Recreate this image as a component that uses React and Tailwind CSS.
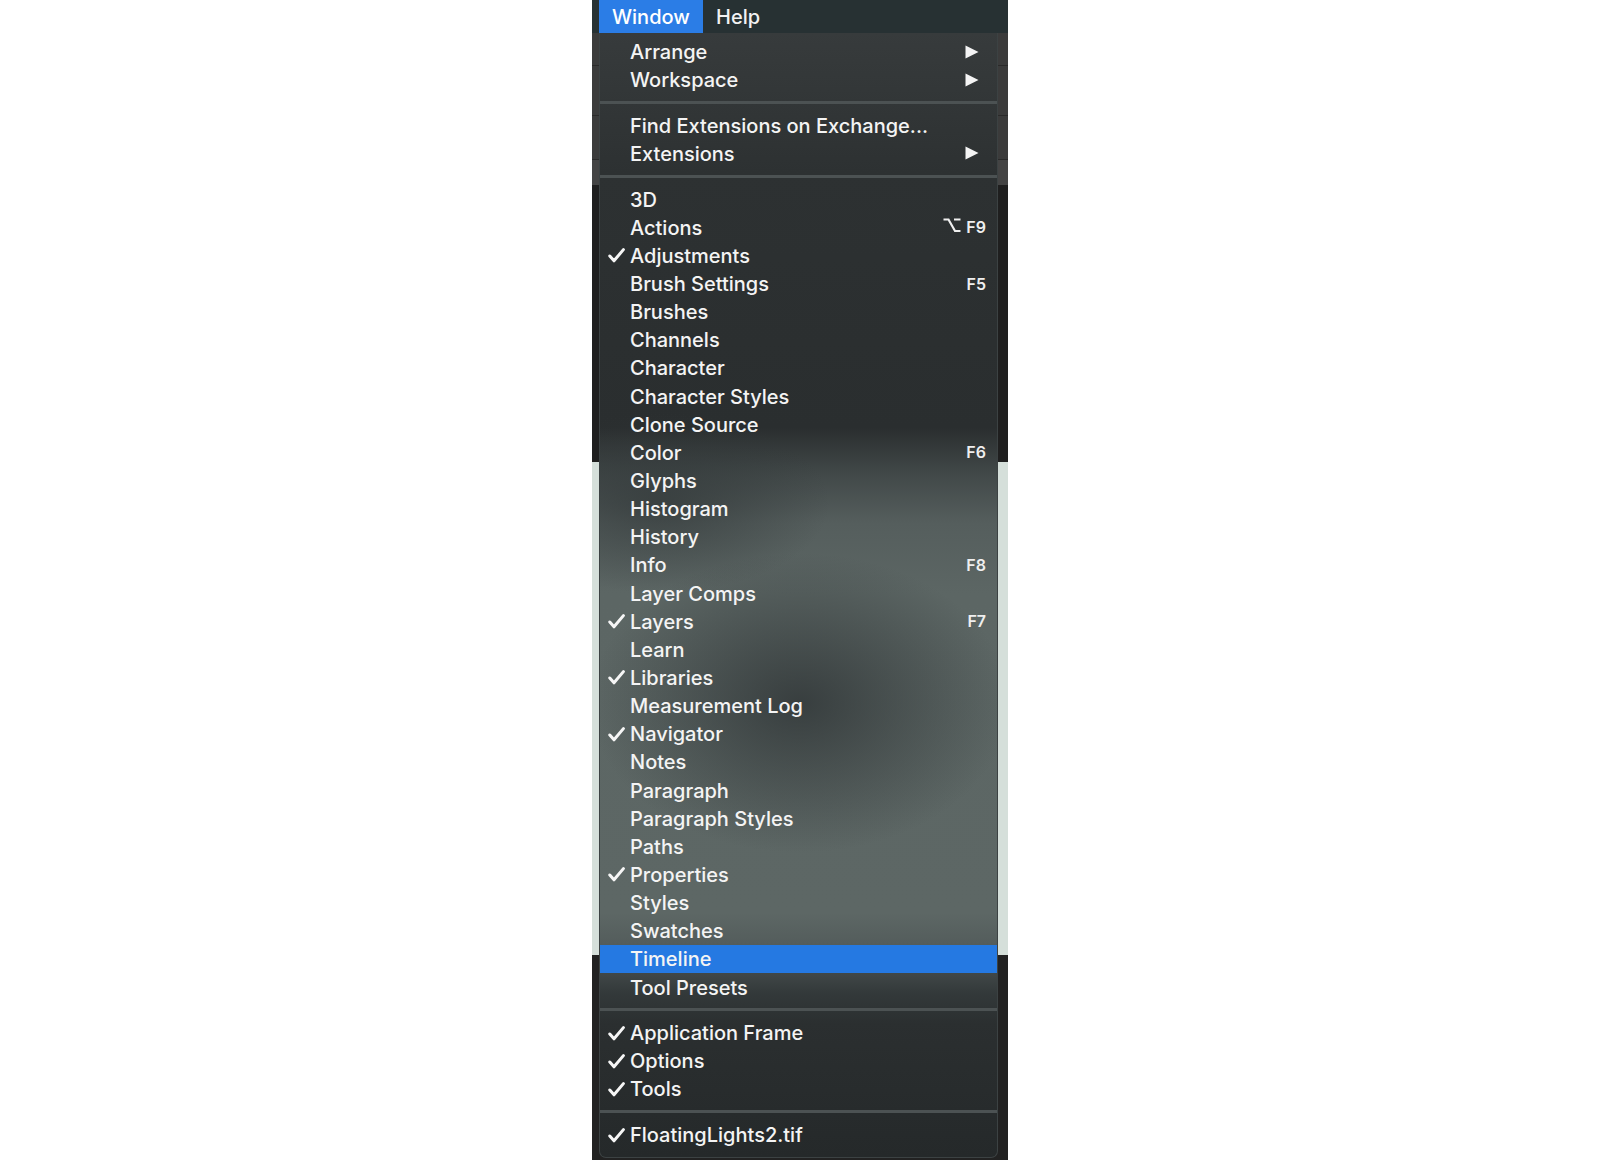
const groups = [
  [
    { label: 'Arrange', sub: true },
    { label: 'Workspace', sub: true },
  ],
  [
    { label: 'Find Extensions on Exchange...' },
    { label: 'Extensions', sub: true },
  ],
  [
    { label: '3D' },
    { label: 'Actions', shortcut: 'F9', alt: true },
    { label: 'Adjustments', checked: true },
    { label: 'Brush Settings', shortcut: 'F5' },
    { label: 'Brushes' },
    { label: 'Channels' },
    { label: 'Character' },
    { label: 'Character Styles' },
    { label: 'Clone Source' },
    { label: 'Color', shortcut: 'F6' },
    { label: 'Glyphs' },
    { label: 'Histogram' },
    { label: 'History' },
    { label: 'Info', shortcut: 'F8' },
    { label: 'Layer Comps' },
    { label: 'Layers', checked: true, shortcut: 'F7' },
    { label: 'Learn' },
    { label: 'Libraries', checked: true },
    { label: 'Measurement Log' },
    { label: 'Navigator', checked: true },
    { label: 'Notes' },
    { label: 'Paragraph' },
    { label: 'Paragraph Styles' },
    { label: 'Paths' },
    { label: 'Properties', checked: true },
    { label: 'Styles' },
    { label: 'Swatches' },
    { label: 'Timeline', active: true },
    { label: 'Tool Presets' },
  ],
  [
    { label: 'Application Frame', checked: true },
    { label: 'Options', checked: true },
    { label: 'Tools', checked: true },
  ],
  [{ label: 'FloatingLights2.tif', checked: true }],
]

function Check() {
  return (
    <svg width="17" height="15" viewBox="0 0 17 15" className="absolute left-[8px] top-[7px]">
      <path d="M1.8 8 L6 12.8 L15.4 1.6" fill="none" stroke="#f6f6f6" strokeWidth="3" strokeLinecap="round" strokeLinejoin="round" />
    </svg>
  )
}

function Arrow() {
  return (
    <svg width="14" height="14" viewBox="0 0 14 14" className="mr-[18px]">
      <path d="M0.5 0.5 L13.5 7 L0.5 13.5 Z" fill="#f4f4f4" />
    </svg>
  )
}

function OptionKey() {
  return (
    <svg width="18" height="15" viewBox="0 0 18 15" className="mr-[5px] mt-[-3px]">
      <path d="M0.5 1.5 H5.5 L12 13 H17.5 M11 1.5 H17.5" fill="none" stroke="#efefef" strokeWidth="2.2" />
    </svg>
  )
}

function Item({ item }) {
  return (
    <div
      className={`relative flex h-[28.15px] items-center justify-between pl-[30px] ${
        item.active ? 'bg-[#2579e2]' : ''
      }`}
    >
      {item.checked && <Check />}
      <span className="pt-[1px] text-[20px] font-medium leading-none text-[#f4f4f4]">{item.label}</span>
      {item.sub && <Arrow />}
      {item.shortcut && (
        <span className="mr-[11px] flex items-center text-[16px] font-semibold leading-none text-[#efefef]">
          {item.alt && <OptionKey />}
          {item.shortcut}
        </span>
      )}
    </div>
  )
}

export default function App() {
  return (
    <div className="h-[1160px] w-full overflow-hidden bg-white font-['Inter','Liberation_Sans',sans-serif]">
      <div className="relative ml-[592px] flex h-full w-[416px] flex-col">
        {/* menu bar */}
        <div className="flex h-[33px] shrink-0 items-center bg-[#273133] pl-[7px]">
          <div className="flex h-full w-[104px] items-center bg-[#2b7de6] pl-[13px] text-[20px] font-medium text-white">Window</div>
          <div className="pl-[13px] text-[20px] font-medium text-[#f2f2f2]">Help</div>
        </div>
        {/* panels behind the menu */}
        <div className="flex h-[152px] shrink-0 flex-col bg-[#3b3b3b]">
          <div className="h-[33px] border-b border-[#2a2a2a]" />
          <div className="h-[50px] border-b border-[#2a2a2a]" />
          <div className="h-[44px] border-b border-[#2a2a2a]" />
          <div className="flex-1 bg-[#444444]" />
        </div>
        <div className="h-[277px] shrink-0 bg-[#1f1f1f]" />
        <div className="h-[493px] shrink-0 bg-[#d5dfda]" />
        <div className="flex-1 bg-[#222222]" />

        {/* dropdown */}
        <div className="absolute left-[7px] top-[33px] w-[399px] overflow-hidden rounded-b-[7px] border-x border-b border-[#3c4243] bg-[radial-gradient(ellipse_210px_150px_at_200px_670px,rgba(52,58,59,0.9),rgba(52,58,59,0)),radial-gradient(ellipse_170px_90px_at_60px_470px,rgba(50,56,57,0.7),rgba(50,56,57,0)),linear-gradient(180deg,#373b3c_0px,#2d3132_140px,#2a2e2f_395px,#414848_440px,#555e5d_490px,#5c6664_560px,#5d6765_880px,#545d5c_910px,#444b4b_935px,#33393a_960px,#2b2f30_990px,#25292a_100%)] pb-[8px] pt-[4.5px]">
          {groups.map((group, gi) => (
            <div key={gi}>
              {gi > 0 && (
                <div className="flex h-[17.5px] items-center">
                  <div className="h-[3px] w-full bg-[#4c5253]" />
                </div>
              )}
              {group.map((item) => (
                <Item key={item.label} item={item} />
              ))}
            </div>
          ))}
        </div>
      </div>
    </div>
  )
}
